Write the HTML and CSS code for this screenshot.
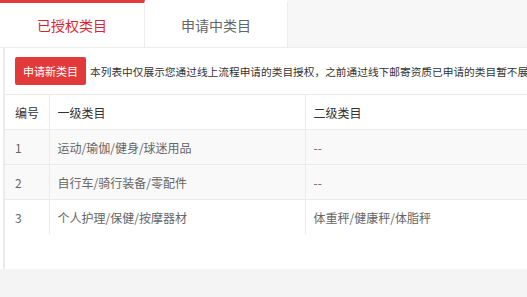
FILE: index.html
```html
<!DOCTYPE html>
<html lang="zh-CN">
<head>
<meta charset="utf-8">
<title>类目管理</title>
<link rel="stylesheet" href="styles.css">
</head>
<body>
<div class="page">
  <div class="tabs">
    <div class="tab active">已授权类目</div>
    <div class="tab">申请中类目</div>
  </div>
  <div class="panel">
    <div class="toolbar">
      <button class="btn-primary" type="button">申请新类目</button>
      <span class="notice">本列表中仅展示您通过线上流程申请的类目授权，之前通过线下邮寄资质已申请的类目暂不展示</span>
    </div>
    <table class="grid">
      <colgroup>
        <col class="c-num">
        <col class="c-first">
        <col class="c-second">
      </colgroup>
      <thead>
        <tr><th>编号</th><th>一级类目</th><th>二级类目</th></tr>
      </thead>
      <tbody>
        <tr class="alt"><td>1</td><td>运动/瑜伽/健身/球迷用品</td><td>--</td></tr>
        <tr class="alt"><td>2</td><td>自行车/骑行装备/零配件</td><td>--</td></tr>
        <tr><td>3</td><td>个人护理/保健/按摩器材</td><td>体重秤/健康秤/体脂秤</td></tr>
      </tbody>
    </table>
  </div>
</div>
</body>
</html>
```

FILE: styles.css
```css
html, body {
  margin: 0;
  padding: 0;
  background: #f4f4f4;
  overflow: hidden;
}
body {
  font-family: "Noto Sans CJK SC", "Noto Sans", sans-serif;
  color: #333;
}
.page {
  width: 760px;
  background: #fff;
}
.tabs {
  display: flex;
  height: 47px;
  background: #f7f7f7;
  border-bottom: 1px solid #ececec;
}
.tab {
  width: 145px;
  box-sizing: border-box;
  display: flex;
  align-items: center;
  justify-content: center;
  background: #fff;
  border-top: 3px solid #fff;
  border-right: 1px solid #ececec;
  font-size: 14px;
  color: #666;
  padding-bottom: 1px;
}
.tab.active {
  border-top-color: #e4393c;
  color: #d9272e;
}
.tab + .tab {
  width: 143px;
}
.panel {
  margin-left: 3px;
  border-left: 2px solid #ebebeb;
  background: #fff;
  padding-bottom: 35px;
}
.toolbar {
  display: flex;
  align-items: center;
  padding: 9px 10px;
  white-space: nowrap;
  overflow: hidden;
}
.btn-primary {
  height: 28px;
  padding: 0 8px;
  border: 0;
  border-radius: 2px;
  background: #e2393a;
  color: #fff;
  font-family: inherit;
  font-size: 11px;
  line-height: 28px;
}
.notice {
  margin-left: 4px;
  font-size: 10.7px;
  color: #333;
}
.grid {
  width: 100%;
  border-collapse: collapse;
  font-size: 12px;
}
.c-num { width: 44px; }
.c-first { width: 256px; }
.grid th, .grid td {
  height: 34px;
  padding: 0 8px;
  text-align: left;
  font-weight: normal;
  border-top: 1px solid #ebebeb;
  color: #666;
}
.grid th:first-child, .grid td:first-child {
  padding-left: 10px;
}
.grid th {
  color: #333;
}
.grid th + th, .grid td + td {
  border-left: 1px solid #ebebeb;
}
.grid tr.alt td {
  background: #f9f9f9;
}
```
